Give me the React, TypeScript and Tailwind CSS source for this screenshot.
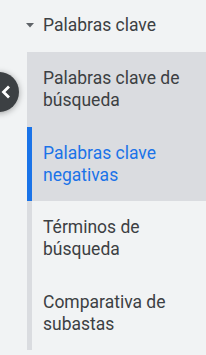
import React from "react";

const items = [
  { label: ["Palabras clave de", "búsqueda"], active: false, gray: true },
  { label: ["Palabras clave", "negativas"], active: true, gray: true },
  { label: ["Términos de", "búsqueda"], active: false, gray: false },
  { label: ["Comparativa de", "subastas"], active: false, gray: false },
];

export default function App() {
  return (
    <div
      className="relative w-[206px] h-[355px] bg-[#f1f3f4] overflow-hidden"
      style={{ fontFamily: "Roboto, 'Noto Sans', sans-serif" }}
    >
      <div className="flex items-center h-[52px] pl-[26px] pb-[2px]">
        <svg width="8" height="5" viewBox="0 0 8 5" className="mr-[9px]">
          <path d="M0 0 L8 0 L4 4.5 Z" fill="#5f6368" />
        </svg>
        <span className="text-[17.5px] text-[#3c4043] leading-[22px]">Palabras clave</span>
      </div>
      <div className="ml-[27px] flex flex-col">
        {items.map((it, i) => (
          <div
            key={i}
            className={
              "h-[74.5px] flex flex-col justify-center pl-[11px] border-l-[5px] text-[17.5px] leading-[22px] " +
              (it.active ? "border-[#1a73e8] text-[#1a73e8] " : "border-[#dadce0] text-[#3c4043] ") +
              (it.gray ? "bg-[#dadce0]" : "bg-[#f1f3f4]")
            }
          >
            <span>{it.label[0]}</span>
            <span>{it.label[1]}</span>
          </div>
        ))}
      </div>
      <div className="absolute left-[-21px] top-[72px] w-[40px] h-[40px] rounded-full bg-[#3c4043] shadow-[0_1px_6px_rgba(0,0,0,0.35)] flex items-center justify-end pr-[8px]">
        <svg width="10" height="14" viewBox="0 0 10 14">
          <path d="M8 1.5 L2.5 7 L8 12.5" stroke="#fff" strokeWidth="2.8" fill="none" />
        </svg>
      </div>
    </div>
  );
}
